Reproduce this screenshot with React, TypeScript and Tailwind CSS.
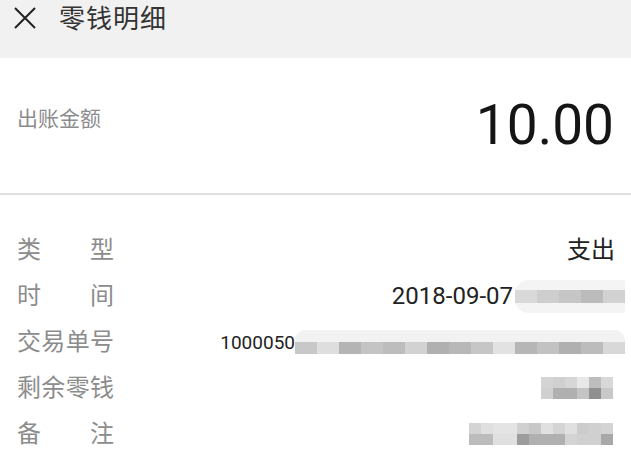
import React from 'react';

const FONT = "font-['Roboto','Noto_Sans_CJK_SC',sans-serif]";

// pixelated privacy blocks, rows of grey tiles
const Mosaic: React.FC<{ rows: string[][]; cell: string; className?: string }> = ({ rows, cell, className }) => (
  <div className={`flex flex-col blur-[0.6px] ${className ?? ''}`}>
    {rows.map((row, i) => (
      <div key={i} className="flex">
        {row.map((c, j) => (
          <div key={j} className={`${cell} ${c}`} />
        ))}
      </div>
    ))}
  </div>
);

const Label: React.FC<{ chars: string[] }> = ({ chars }) => (
  <div className="w-[97px] flex justify-between text-[24px] leading-none text-[#8c8c8c]">
    {chars.map((c, i) => (
      <span key={i}>{c}</span>
    ))}
  </div>
);

const Row: React.FC<{ chars: string[]; children: React.ReactNode }> = ({ chars, children }) => (
  <div className="h-[46px] flex items-center justify-between">
    <Label chars={chars} />
    <div className="flex items-center">{children}</div>
  </div>
);

export default function App() {
  return (
    <div className={`w-full min-h-screen bg-white ${FONT}`}>
      {/* header */}
      <div className="h-[58px] bg-[#f1f1f1] flex items-start pt-[6px] pl-[14px]">
        <svg width="22" height="22" viewBox="0 0 22 22" className="mt-[1px]">
          <path d="M1 1 L21 21 M21 1 L1 21" stroke="#222" strokeWidth="2" fill="none" />
        </svg>
        <span className="ml-[23px] text-[26px] leading-none text-[#333] tracking-[1px]">零钱明细</span>
      </div>

      {/* amount */}
      <div className="h-[137px] flex items-center justify-between pl-[17px] pr-[17px] border-b-2 border-[#dfdfdf]">
        <span className="mb-[12px] text-[21px] leading-none text-[#8c8c8c]">出账金额</span>
        <span className="text-[55px] leading-none text-[#151515]">10.00</span>
      </div>

      {/* detail rows */}
      <div className="pt-[32px] pl-[17px] pr-[16px]">
        <Row chars={['类', '型']}>
          <span className="text-[24px] leading-none text-[#222]">支出</span>
        </Row>
        <Row chars={['时', '间']}>
          <span className="text-[24px] leading-none text-[#222]">2018-09-07</span>
          <div className="-mr-[10px] ml-[2px] h-[33px] w-[110px] rounded-l-[14px] bg-[#f4f4f4] flex items-center">
            <Mosaic
              cell="w-[22px] h-[13px]"
              rows={[['bg-[#d9d9d9]', 'bg-[#cecece]', 'bg-[#c6c6c6]', 'bg-[#bbbbbb]', 'bg-[#d2d2d2]']]}
            />
          </div>
        </Row>
        <Row chars={['交', '易', '单', '号']}>
          <span className="text-[19px] leading-none text-[#222]">1000050</span>
          <div className="-mr-[10px] h-[24px] w-[330px] rounded-t-[10px] bg-[#f2f2f2] flex items-end">
            <Mosaic
              cell="w-[22px] h-[12px]"
              rows={[
                [
                  'bg-[#c8c8c8]', 'bg-[#dedede]', 'bg-[#b4b4b4]', 'bg-[#c4c4c4]', 'bg-[#bdbdbd]',
                  'bg-[#d2d2d2]', 'bg-[#b0b0b0]', 'bg-[#b8b8b8]', 'bg-[#c6c6c6]', 'bg-[#e2e2e2]',
                  'bg-[#b6b6b6]', 'bg-[#c2c2c2]', 'bg-[#b0b0b0]', 'bg-[#bcbcbc]', 'bg-[#d8d8d8]',
                ],
              ]}
            />
          </div>
        </Row>
        <Row chars={['剩', '余', '零', '钱']}>
          <Mosaic
            className="mr-[2px]"
            cell="w-[12px] h-[11px]"
            rows={[
              ['bg-[#d4d4d4]', 'bg-[#d0d0d0]', 'bg-[#d6d6d6]', 'bg-[#e8e8e8]', 'bg-[#bdbdbd]', 'bg-[#d8d8d8]'],
              ['bg-[#d0d0d0]', 'bg-[#b0b0b0]', 'bg-[#b0b0b0]', 'bg-[#c4c4c4]', 'bg-[#909090]', 'bg-[#c8c8c8]'],
            ]}
          />
        </Row>
        <Row chars={['备', '注']}>
          <Mosaic
            className="mr-[2px]"
            cell="w-[12px] h-[11px]"
            rows={[
              [
                'bg-[#d4d4d4]', 'bg-[#e0e0e0]', 'bg-[#e4e4e4]', 'bg-[#e4e4e4]', 'bg-[#d0d0d0]', 'bg-[#c8c8c8]',
                'bg-[#e0e0e0]', 'bg-[#d4d4d4]', 'bg-[#e0e0e0]', 'bg-[#cccccc]', 'bg-[#d0d0d0]', 'bg-[#d4d4d4]',
              ],
              [
                'bg-[#bcbcbc]', 'bg-[#bcbcbc]', 'bg-[#e0e0e0]', 'bg-[#e0e0e0]', 'bg-[#9c9c9c]', 'bg-[#b0b0b0]',
                'bg-[#b0b0b0]', 'bg-[#b0b0b0]', 'bg-[#d4d4d4]', 'bg-[#d0d0d0]', 'bg-[#d0d0d0]', 'bg-[#a8a8a8]',
              ],
            ]}
          />
        </Row>
      </div>
    </div>
  );
}
